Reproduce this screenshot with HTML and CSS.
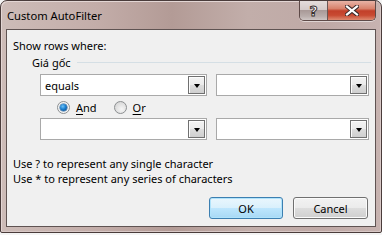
FILE: index.html
```html
<!DOCTYPE html>
<html>
<head>
<meta charset="utf-8">
<link rel="stylesheet" href="styles.css">
</head>
<body>
<div class="window">
  <div class="titlebar">
    <span class="title">Custom AutoFilter</span>
    <div class="caption">
      <div class="cap-help"><span class="help-glyph">?</span></div>
      <div class="cap-close">
        <svg width="14" height="11" viewBox="0 0 14 11">
          <path d="M2 1.5 L12 9.5 M12 1.5 L2 9.5" stroke="#3b2a2a" stroke-width="4.2" stroke-linecap="square"/>
          <path d="M2 1.5 L12 9.5 M12 1.5 L2 9.5" stroke="#ffffff" stroke-width="2.2" stroke-linecap="square"/>
        </svg>
      </div>
    </div>
  </div>
  <div class="client">
    <div class="label">Show rows where:</div>
    <div class="group">
      <span class="group-label">Giá gốc</span>
      <span class="group-line"></span>
    </div>
    <div class="row first">
      <div class="combo left"><span class="combo-text">equals</span><span class="drop"><span class="arrow"></span></span></div>
      <div class="combo right"><span class="combo-text"></span><span class="drop"><span class="arrow"></span></span></div>
    </div>
    <div class="radios">
      <span class="radio checked"><span class="dot"></span></span>
      <span class="radio-label"><u>A</u>nd</span>
      <span class="radio"></span>
      <span class="radio-label"><u>O</u>r</span>
    </div>
    <div class="row">
      <div class="combo left"><span class="combo-text"></span><span class="drop"><span class="arrow"></span></span></div>
      <div class="combo right"><span class="combo-text"></span><span class="drop"><span class="arrow"></span></span></div>
    </div>
    <div class="hints">
      <div>Use ? to represent any single character</div>
      <div>Use * to represent any series of characters</div>
    </div>
    <div class="buttons">
      <div class="btn default">OK</div>
      <div class="btn">Cancel</div>
    </div>
  </div>
</div>
</body>
</html>
```
FILE: styles.css
```css
html, body {
  margin: 0;
  padding: 0;
}
body {
  width: 382px;
  height: 235px;
  background: #f4f4f4;
  font-family: "Noto Sans", "Open Sans", sans-serif;
  font-size: 11px;
  color: #000;
  overflow: hidden;
}
.window {
  box-sizing: border-box;
  width: 382px;
  height: 233px;
  border: 1px solid #4a3c3b;
  border-radius: 7px 7px 2px 2px;
  background: linear-gradient(90deg, #cdbcb8 0%, #c3ada9 25%, #b39b96 45%, #c2aeaa 65%, #bfa9a6 85%, #c7b3b0 100%);
  box-shadow: inset 1px 1px 0 #e3d6d4, inset -1px -1px 0 #d8c8c6;
  padding: 0 5px 5px 5px;
  display: flex;
  flex-direction: column;
}
.titlebar {
  height: 28px;
  display: flex;
  align-items: flex-start;
}
.title {
  font-size: 11.2px;
  line-height: 14px;
  margin-top: 8px;
  margin-left: 1px;
  color: #000;
}
.caption {
  margin-left: auto;
  display: flex;
  height: 19px;
  border: 1px solid #5e4a48;
  border-top: none;
  border-radius: 0 0 5px 5px;
  overflow: hidden;
  box-shadow: 0 1px 0 rgba(255,255,255,0.5);
}
.cap-help {
  width: 27px;
  height: 19px;
  background: linear-gradient(180deg, #e4dcdb 0%, #d5cbca 45%, #a99a98 50%, #b9adab 80%, #cfc6c5 100%);
  border-right: 1px solid #6a5654;
  display: flex;
  align-items: center;
  justify-content: center;
}
.help-glyph {
  font-family: "DejaVu Sans", sans-serif;
  font-weight: bold;
  font-size: 14px;
  line-height: 14px;
  color: #ffffff;
  -webkit-text-stroke: 1px #3b3030;
}
.cap-close {
  width: 47px;
  height: 19px;
  background: linear-gradient(180deg, #e8b3a6 0%, #d8826c 40%, #c2402a 52%, #c84a32 75%, #dd8a70 100%);
  display: flex;
  align-items: center;
  justify-content: center;
}
.client {
  flex: 1;
  box-sizing: border-box;
  background: #f0f0f0;
  border: 1px solid #5f5352;
  display: flex;
  flex-direction: column;
}
.label {
  margin-top: 8px;
  margin-left: 6px;
  line-height: 15px;
}
.group {
  display: flex;
  align-items: center;
  margin-top: 2px;
  margin-left: 25px;
  height: 15px;
}
.group-label {
  line-height: 15px;
}
.group-line {
  flex: 1;
  height: 1px;
  background: #d5dfe5;
  margin-left: 6px;
  margin-right: 4px;
}
.row {
  display: flex;
  margin-left: 33px;
  gap: 9px;
  height: 22px;
}
.row.first {
  margin-top: 4px;
}
.combo {
  box-sizing: border-box;
  height: 22px;
  background: #ffffff;
  border: 1px solid #a9a9a9;
  display: flex;
  align-items: center;
  padding: 1px;
}
.combo.left {
  width: 167px;
}
.combo.right {
  width: 153px;
}
.combo-text {
  flex: 1;
  padding-left: 3px;
  line-height: 15px;
}
.drop {
  box-sizing: border-box;
  width: 17px;
  height: 18px;
  border: 1px solid #707070;
  background: linear-gradient(180deg, #f3f3f3 0%, #ebebeb 50%, #dddddd 51%, #cfcfcf 100%);
  box-shadow: inset 1px 1px 0 #fcfcfc;
  display: flex;
  align-items: center;
  justify-content: center;
}
.arrow {
  width: 0;
  height: 0;
  border-left: 3.5px solid transparent;
  border-right: 3.5px solid transparent;
  border-top: 4px solid #000;
  margin-top: 1px;
}
.radios {
  display: flex;
  align-items: center;
  height: 22px;
  margin-left: 50px;
}
.radio {
  box-sizing: border-box;
  width: 13px;
  height: 13px;
  border-radius: 50%;
  border: 1px solid #8c8f91;
  background: radial-gradient(circle at 60% 65%, #f6f6f6 0%, #dedede 60%, #cfcfcf 100%);
  display: flex;
  align-items: center;
  justify-content: center;
}
.radio.checked {
  background: radial-gradient(circle, #ffffff 0%, #f4f4f4 70%, #dcdcdc 100%);
}
.dot {
  width: 7px;
  height: 7px;
  border-radius: 50%;
  background: radial-gradient(circle at 40% 35%, #6fc3f5 0%, #1b7fd0 45%, #0a3f79 100%);
  box-shadow: 0 0 0 0.5px #2a5f8f;
}
.radio-label {
  margin-left: 6px;
  margin-right: 17px;
  line-height: 15px;
}
.radio-label u {
  text-decoration-thickness: 1px;
  text-underline-offset: 2px;
}
.hints {
  margin-top: 16px;
  margin-left: 6px;
  line-height: 15px;
}
.buttons {
  display: flex;
  gap: 10px;
  margin-top: 11px;
  margin-left: 202px;
}
.btn {
  box-sizing: border-box;
  width: 75px;
  height: 22px;
  border: 1px solid #707070;
  border-radius: 3px;
  background: linear-gradient(180deg, #f2f2f2 0%, #ebebeb 50%, #dddddd 51%, #cfcfcf 100%);
  box-shadow: inset 0 0 0 1px #fbfbfb;
  display: flex;
  align-items: center;
  justify-content: center;
  line-height: 15px;
}
.btn.default {
  width: 74px;
  border-color: #3c7fb1;
  background: linear-gradient(180deg, #eaf6fd 0%, #d9f0fc 50%, #bee6fd 51%, #a7d9f5 100%);
  box-shadow: inset 0 0 0 1px #b0e3fb;
}
```
